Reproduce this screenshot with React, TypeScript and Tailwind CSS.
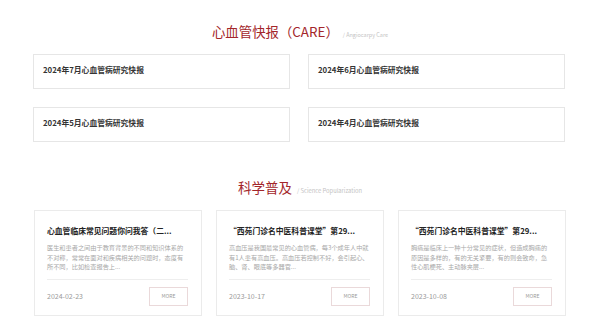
import React from "react";

const font = { fontFamily: '"Noto Sans CJK SC", "Noto Sans", sans-serif' };

const reports = [
  "2024年7月心血管病研究快报",
  "2024年6月心血管病研究快报",
  "2024年5月心血管病研究快报",
  "2024年4月心血管病研究快报",
];

const cards = [
  {
    title: "心血管临床常见问题你问我答（二...",
    lines: [
      "医生和患者之间由于教育背景的不同和知识体系的",
      "不对称，常常在面对和疾病相关的问题时，态度有",
      "所不同，比如检查报告上...",
    ],
    date: "2024-02-23",
  },
  {
    title: "“西苑门诊名中医科普课堂”第29...",
    lines: [
      "高血压是我国最常见的心血管病，每3个成年人中就",
      "有1人患有高血压。高血压若控制不好，会引起心、",
      "脑、肾、眼底等多器官...",
    ],
    date: "2023-10-17",
  },
  {
    title: "“西苑门诊名中医科普课堂”第29...",
    lines: [
      "胸痛是临床上一种十分常见的症状，但造成胸痛的",
      "原因是多样的，有的无关紧要，有的则会致命，急",
      "性心肌梗死、主动脉夹层...",
    ],
    date: "2023-10-08",
  },
];

export default function App() {
  return (
    <div className="w-[600px] h-[332px] overflow-hidden bg-white" style={font}>
      <div className="flex items-baseline justify-center pt-[22px]">
        <span className="text-[13.4px] leading-[18px] text-[#a3262a]">心血管快报（CARE）</span>
        <span className="ml-[4px] text-[5.5px] text-[#c4c4c4]">/ Angiocarpy Care</span>
      </div>
      <div className="ml-[33px] mt-[14px] grid w-[532px] grid-cols-2 gap-x-[18px] gap-y-[18px]">
        {reports.map((r) => (
          <div
            key={r}
            className="h-[35px] border border-[#e6e6e6] pl-[9px] pt-[9px] text-[7.8px] font-bold leading-[12px] text-[#333]"
          >
            {r}
          </div>
        ))}
      </div>
      <div className="mt-[36px] flex items-baseline justify-center">
        <span className="text-[13.5px] leading-[18px] text-[#a3262a]">科学普及</span>
        <span className="ml-[5px] text-[5.8px] text-[#c4c4c4]">/ Science Popularization</span>
      </div>
      <div className="ml-[34px] mt-[14px] grid w-[532px] grid-cols-3 gap-x-[14px]">
        {cards.map((c, i) => (
          <div key={i} className="h-[106px] border border-[#ebebeb] pl-[12px] pr-[13px] pt-[14px]">
            <div className="text-[7.8px] font-bold leading-[12px] text-[#222] whitespace-nowrap">{c.title}</div>
            <div className="mt-[6px] text-[6.2px] leading-[9.5px] text-[#a8a8a8] whitespace-nowrap">
              {c.lines.map((l, j) => (
                <div key={j}>{l}</div>
              ))}
            </div>
            <div className="mt-[7px] border-t border-[#eeeeee]" />
            <div className="mt-[7px] flex items-center justify-between">
              <span className="text-[7px] text-[#9a9a9a]">{c.date}</span>
              <span className="flex h-[19px] w-[39px] items-center justify-center border border-[#ead9da] text-[5px] text-[#999]">
                MORE
              </span>
            </div>
          </div>
        ))}
      </div>
    </div>
  );
}
